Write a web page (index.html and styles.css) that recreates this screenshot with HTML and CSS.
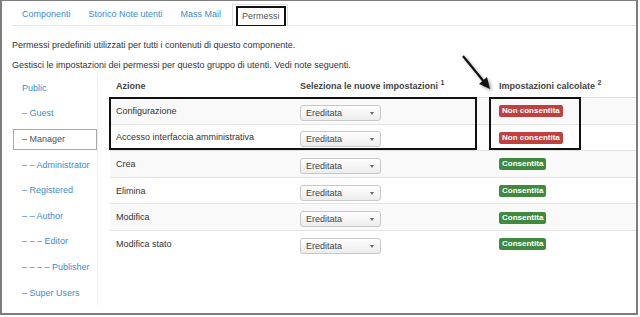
FILE: index.html
```html
<!DOCTYPE html>
<html lang="it">
<head>
    <meta charset="UTF-8">
    <title>Permessi</title>
    <link rel="stylesheet" href="styles.css">
</head>
<body>
    <div class="frame">
        <ul class="tabs">
            <li><a href="#">Componenti</a></li>
            <li><a href="#">Storico Note utenti</a></li>
            <li><a href="#">Mass Mail</a></li>
            <li class="active"><span>Permessi</span></li>
        </ul>

        <p class="note first">Permessi predefiniti utilizzati per tutti i contenuti di questo componente.</p>
        <p class="note">Gestisci le impostazioni dei permessi per questo gruppo di utenti. Vedi note seguenti.</p>

        <div class="perms">
            <ul class="groups">
                <li><a href="#">Public</a></li>
                <li><a href="#">&ndash; Guest</a></li>
                <li class="current"><a href="#">&ndash; Manager</a></li>
                <li><a href="#">&ndash; &ndash; Administrator</a></li>
                <li><a href="#">&ndash; Registered</a></li>
                <li><a href="#">&ndash; &ndash; Author</a></li>
                <li><a href="#">&ndash; &ndash; &ndash; Editor</a></li>
                <li><a href="#">&ndash; &ndash; &ndash; &ndash; Publisher</a></li>
                <li><a href="#">&ndash; Super Users</a></li>
            </ul>

            <table class="rules">
                <thead>
                    <tr>
                        <th class="c-action">Azione</th>
                        <th class="c-select">Seleziona le nuove impostazioni <sup>1</sup></th>
                        <th>Impostazioni calcolate <sup>2</sup></th>
                    </tr>
                </thead>
                <tbody>
                    <tr>
                        <td>Configurazione</td>
                        <td><span class="select">Ereditata</span></td>
                        <td><span class="badge denied">Non consentita</span></td>
                    </tr>
                    <tr>
                        <td>Accesso interfaccia amministrativa</td>
                        <td><span class="select">Ereditata</span></td>
                        <td><span class="badge denied">Non consentita</span></td>
                    </tr>
                    <tr>
                        <td>Crea</td>
                        <td><span class="select">Ereditata</span></td>
                        <td><span class="badge allowed">Consentita</span></td>
                    </tr>
                    <tr>
                        <td>Elimina</td>
                        <td><span class="select">Ereditata</span></td>
                        <td><span class="badge allowed">Consentita</span></td>
                    </tr>
                    <tr>
                        <td>Modifica</td>
                        <td><span class="select">Ereditata</span></td>
                        <td><span class="badge allowed">Consentita</span></td>
                    </tr>
                    <tr>
                        <td>Modifica stato</td>
                        <td><span class="select">Ereditata</span></td>
                        <td><span class="badge allowed">Consentita</span></td>
                    </tr>
                </tbody>
            </table>
        </div>

        <!-- annotations drawn over the screenshot -->
        <div class="mark mark-rows"></div>
        <div class="mark mark-calc"></div>
        <svg class="arrow" width="48" height="48" viewBox="0 0 48 48">
            <line x1="7" y1="6" x2="29" y2="33" stroke="#111" stroke-width="2.2"/>
            <polygon points="34,39 23,34 31,27" fill="#111"/>
        </svg>
    </div>
</body>
</html>
```

FILE: styles.css
```css
body {
    margin: 0;
    background: #fff;
    font-family: "Liberation Sans", Arial, sans-serif;
    font-size: 9px;
    color: #333;
}
a {
    color: #3c8ccf;
    text-decoration: none;
}
.frame {
    position: relative;
    width: 638px;
    height: 315px;
    box-sizing: border-box;
    border: 2px solid #7d7d7d;
    border-top-width: 1px;
    overflow: hidden;
}

/* tabs */
.tabs {
    display: flex;
    align-items: flex-end;
    height: 24px;
    margin: 0 0 0 10px;
    padding: 0 0 0 1px;
    list-style: none;
    border-bottom: 1px solid #e6e6e6;
}
.tabs li a {
    display: block;
    padding: 0 9px 5px;
    line-height: 12px;
}
.tabs li.active {
    margin: 0 0 -1px 2px;
    padding: 1px 1px 0 3px;
    background: #fff;
    border: 1px solid #ddd;
    border-bottom: none;
}
.tabs li.active span {
    display: block;
    padding: 0 4px;
    line-height: 17px;
    color: #555;
    border: 2px solid #111;
    border-bottom-width: 1px;
}

.note {
    margin: 8px 0 0 10px;
    line-height: 12px;
}
.note.first {
    margin-top: 13px;
}

/* groups + rules */
.perms {
    display: flex;
    gap: 12px;
    margin-top: 2px;
}
.groups {
    width: 95px;
    margin: 2px 0 0;
    padding: 0;
    list-style: none;
    border-right: 1px solid #eee;
}
.groups li {
    display: flex;
    align-items: center;
    height: 25.6px;
}
.groups li a {
    padding-left: 20px;
}
.groups li.current a {
    flex: 1;
    margin: 2px 0 0 11px;
    padding-left: 8px;
    line-height: 19px;
    color: #555;
    border: 1px solid #aaa;
}

.rules {
    width: 526px;
    border-collapse: collapse;
    align-self: flex-start;
}
.rules th {
    height: 23px;
    padding: 1px 6px 0;
    text-align: left;
    font-weight: bold;
    color: #444;
    border-bottom: 1px solid #ddd;
}
.rules th.c-action {
    width: 172px;
}
.rules th.c-select {
    width: 187px;
}
.rules sup {
    font-size: 7px;
    vertical-align: 4px;
    line-height: 0;
}
.rules td {
    height: 25.6px;
    padding: 0 6px;
    border-top: 1px solid #e4e4e4;
}
.rules tbody tr:nth-child(odd) td {
    background: #f9f9f9;
}

.select {
    position: relative;
    display: block;
    width: 74px;
    height: 14px;
    margin-top: 4px;
    padding-left: 5px;
    line-height: 14px;
    color: #444;
    border: 1px solid #c8c8c8;
    border-radius: 3px;
    background: linear-gradient(#fff, #ececec);
}
.select::after {
    content: "";
    position: absolute;
    right: 6px;
    top: 6px;
    border-left: 2.5px solid transparent;
    border-right: 2.5px solid transparent;
    border-top: 3px solid #666;
}

.badge {
    display: inline-block;
    margin-top: 1px;
    padding: 1px 3px;
    line-height: 10px;
    font-size: 8px;
    font-weight: bold;
    color: #fff;
    border-radius: 2px;
}
.badge.denied {
    background: #c0403f;
}
.badge.allowed {
    background: #3f8a3f;
}

/* annotation marks */
.mark {
    position: absolute;
    top: 96px;
    height: 49px;
    border: 2px solid #111;
}
.mark-rows {
    left: 107px;
    width: 364px;
}
.mark-calc {
    left: 487px;
    width: 88px;
}
.arrow {
    position: absolute;
    left: 454px;
    top: 49px;
    filter: drop-shadow(2px 2px 1.5px rgba(0, 0, 0, 0.35));
}
```
